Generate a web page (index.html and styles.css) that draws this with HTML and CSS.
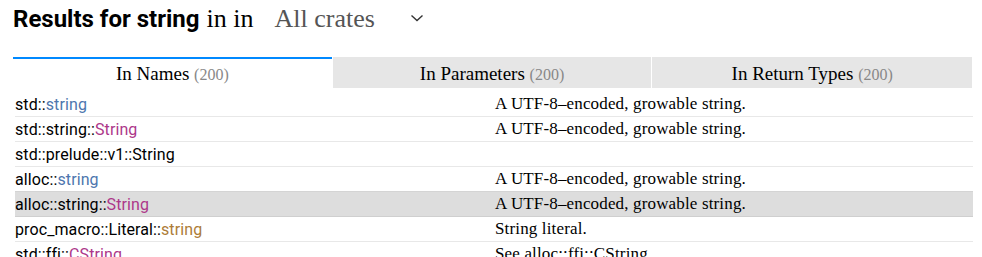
FILE: index.html
```html
<!DOCTYPE html>
<html>
<head>
<meta charset="utf-8">
<link rel="stylesheet" href="styles.css">
</head>
<body>
<main class="page">
  <div class="search-header">
    <h1 class="results-title">Results for string</h1>
    <span class="in-text">in in</span>
    <div class="crate-select">
      <span class="crate-label">All crates</span>
      <svg class="chevron" width="14" height="8" viewBox="0 0 14 8"><path d="M1.5 1.5 L7 6.5 L12.5 1.5" fill="none" stroke="#333" stroke-width="1.4"/></svg>
    </div>
  </div>
  <div class="tabs">
    <button class="tab active">In Names <span class="count">(200)</span></button>
    <button class="tab">In Parameters <span class="count">(200)</span></button>
    <button class="tab">In Return Types <span class="count">(200)</span></button>
  </div>
  <div class="results">
    <a class="row"><span class="name">std::<span class="mod">string</span></span><span class="desc">A UTF-8–encoded, growable string.</span></a>
    <a class="row"><span class="name">std::string::<span class="struct">String</span></span><span class="desc">A UTF-8–encoded, growable string.</span></a>
    <a class="row"><span class="name">std::prelude::v1::String</span><span class="desc"></span></a>
    <a class="row"><span class="name">alloc::<span class="mod">string</span></span><span class="desc">A UTF-8–encoded, growable string.</span></a>
    <a class="row selected"><span class="name">alloc::string::<span class="struct">String</span></span><span class="desc">A UTF-8–encoded, growable string.</span></a>
    <a class="row"><span class="name">proc_macro::Literal::<span class="method">string</span></span><span class="desc">String literal.</span></a>
    <a class="row"><span class="name">std::ffi::<span class="struct">CString</span></span><span class="desc">See alloc::ffi::CString.</span></a>
  </div>
</main>
</body>
</html>
```

FILE: styles.css
```css
html, body {
  margin: 0;
  padding: 0;
  background: #ffffff;
  color: #000000;
}

body {
  font-family: "Liberation Serif", serif;
  overflow: hidden;
}

.page {
  width: 960px;
  padding-left: 13px;
}

.search-header {
  display: flex;
  align-items: baseline;
  height: 57px;
}

.results-title {
  margin: 0;
  font-family: "Roboto", "Noto Sans", sans-serif;
  font-weight: 700;
  font-size: 24px;
  line-height: 38px;
  color: #000;
}

.in-text {
  font-family: "Liberation Serif", serif;
  font-size: 26px;
  margin-left: 7px;
  color: #000;
}

.crate-select {
  display: flex;
  align-items: center;
  margin-left: 21px;
  font-family: "Liberation Serif", serif;
  font-size: 26px;
  color: #555;
}

.crate-label {
  width: 136px;
}

.chevron {
  align-self: center;
  transform: translateY(-1px);
}

.tabs {
  display: flex;
  gap: 1px;
}

.tab {
  flex: 0 0 calc(33.3% - 1px);
  height: 31px;
  border: 0;
  border-top: 2px solid transparent;
  background: #e6e6e6;
  font-family: "Liberation Serif", serif;
  font-size: 19px;
  color: #000;
  padding: 0;
  text-align: center;
}

.tab:last-child {
  flex-basis: 33.3%;
}

.tab.active {
  background: #ffffff;
  border-top-color: #0089ff;
}

.count {
  color: #888;
  font-size: 16px;
}

.results {
  margin-top: 4px;
  margin-left: 2px;
}

.row {
  display: flex;
  height: 24px;
  border-bottom: 1px solid #e8e8e8;
  align-items: center;
  color: #000;
}

.row.selected {
  background: #dddddd;
  border-top: 1px solid #d4d4d4;
  border-bottom-color: #cfcfcf;
  margin-top: -1px;
}

.name {
  width: 480px;
  flex: 0 0 480px;
  font-family: "Roboto", "Noto Sans", sans-serif;
  font-size: 16px;
  letter-spacing: 0.1px;
}

.desc {
  font-family: "Liberation Serif", serif;
  font-size: 17px;
  letter-spacing: 0.15px;
}

.mod { color: #4d76ae; }
.struct { color: #ad378a; }
.method { color: #ad7c37; }
```
